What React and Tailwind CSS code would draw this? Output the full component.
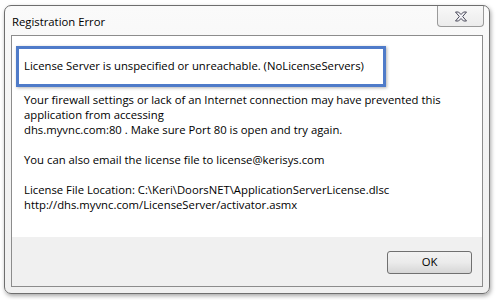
import React from "react";

export default function App() {
  const font = { fontFamily: '"Open Sans", "Noto Sans", sans-serif' };
  return (
    <div className="w-[497px] h-[300px] bg-white overflow-hidden pt-[5px] pl-[4px]" style={font}>
      <div className="relative w-[486px] h-[289px] rounded-[7px] border border-[#6e6e6e] bg-gradient-to-b from-[#fafafa] via-[#f3f3f3] to-[#f0f0f0] shadow-[1px_2px_4px_rgba(0,0,0,0.35)] flex flex-col">
        <div className="h-[29px] flex items-start">
          <div className="pl-[7px] pt-[8px] text-[11.3px] leading-[15px] text-black whitespace-nowrap">Registration Error</div>
          <div className="ml-auto mr-[5px] w-[47px] h-[21px] border border-t-0 border-[#9a9a9a] rounded-b-[4px] bg-gradient-to-b from-[#f8f8f8] to-[#ececec] flex items-center justify-center">
            <svg width="14" height="11" viewBox="0 0 14 11">
              <path
                d="M1.5 1 L4.5 1 L7 3.5 L9.5 1 L12.5 1 L8.7 5.5 L12.5 10 L9.5 10 L7 7.5 L4.5 10 L1.5 10 L5.3 5.5 Z"
                fill="#f2f2f6"
                stroke="#4a4a5a"
                strokeWidth="1"
                strokeLinejoin="round"
              />
            </svg>
          </div>
        </div>
        <div className="mx-[6px] mb-[6px] flex-1 border border-[#8c8c8c] bg-white flex flex-col">
          <div className="flex-1 flex flex-col">
            <div className="ml-[4px] mt-[10px] w-[370px] h-[41px] border-[3px] border-[#4f7bc9] shadow-[1px_1px_3px_rgba(0,0,0,0.3)] flex items-center pl-[5px] pb-[1px] text-[11.3px] text-black whitespace-nowrap">
              License Server is unspecified or unreachable. (NoLicenseServers)
            </div>
            <div className="ml-[12px] mt-[5px] text-[11.3px] leading-[15px] text-black whitespace-nowrap">
              <div>Your firewall settings or lack of an Internet connection may have prevented this</div>
              <div>application from accessing</div>
              <div>dhs.myvnc.com:80 . Make sure Port 80 is open and try again.</div>
              <div className="h-[15px]"></div>
              <div>You can also email the license file to license@kerisys.com</div>
              <div className="h-[15px]"></div>
              <div>License File Location: C:\Keri\DoorsNET\ApplicationServerLicense.dlsc</div>
              <div>http://dhs.myvnc.com/LicenseServer/activator.asmx</div>
            </div>
          </div>
          <div className="h-[49px] bg-[#f0f0f0] flex items-start justify-end pr-[10px] pt-[14px]">
            <div className="w-[85px] h-[23px] rounded-[3px] border border-[#707070] bg-gradient-to-b from-[#f2f2f2] via-[#ebebeb] to-[#d6d6d6] flex items-center justify-center text-[11.3px] text-black">
              OK
            </div>
          </div>
        </div>
      </div>
    </div>
  );
}
